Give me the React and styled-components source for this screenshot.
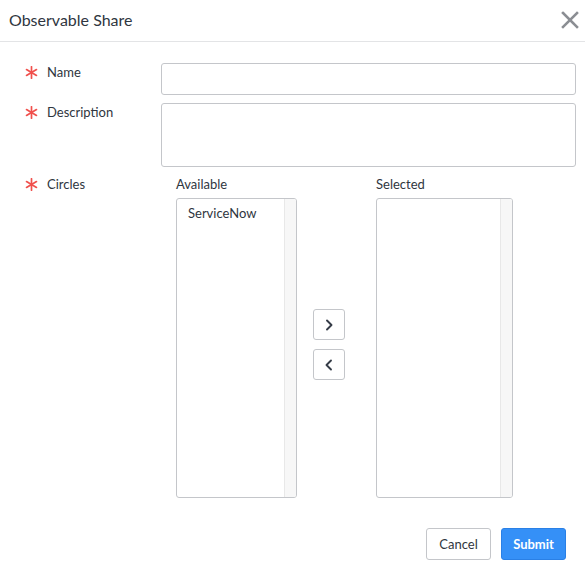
import React, { useState } from 'react';
import styled, { createGlobalStyle } from 'styled-components';

const GlobalStyle = createGlobalStyle`
  body {
    margin: 0;
    background: #fff;
    font-family: Lato, "Liberation Sans", sans-serif;
    color: #2f3640;
  }
`;

const Modal = styled.div`
  width: 585px;
  height: 567px;
  display: flex;
  flex-direction: column;
  background: #fff;
`;

const Header = styled.div`
  height: 42px;
  display: flex;
  align-items: center;
  justify-content: space-between;
  padding: 0 5px 2px 9px;
  border-bottom: 1px solid #e3e4e6;
  box-sizing: border-box;
`;

const Title = styled.h1`
  margin: 0;
  font-size: 16px;
  font-weight: 400;
  color: #2f3640;
`;

const CloseButton = styled.button`
  border: none;
  background: none;
  padding: 0;
  width: 20px;
  height: 20px;
  display: flex;
  align-items: center;
  justify-content: center;
  cursor: pointer;
`;

const Body = styled.div`
  flex: 1;
  padding: 21px 9px 0 25px;
  display: flex;
  flex-direction: column;
  gap: 8px;
`;

const Row = styled.div`
  display: grid;
  grid-template-columns: 136px 1fr;
`;

const Label = styled.label`
  display: flex;
  align-items: flex-start;
  gap: 8px;
  font-size: 13px;
  line-height: 18px;
  color: #2f3640;
`;

const Star = styled.span`
  display: flex;
  width: 14px;
  height: 18px;
  align-items: center;
`;

const TextInput = styled.input`
  height: 32px;
  box-sizing: border-box;
  border: 1px solid #c4c6ca;
  border-radius: 3px;
  padding: 0 8px;
  font: inherit;
  font-size: 13px;
  outline: none;
`;

const TextArea = styled.textarea`
  height: 64px;
  box-sizing: border-box;
  border: 1px solid #c4c6ca;
  border-radius: 3px;
  padding: 6px 8px;
  font: inherit;
  font-size: 13px;
  resize: none;
  outline: none;
`;

const Picker = styled.div`
  display: flex;
  padding-left: 15px;
`;

const Column = styled.div`
  display: flex;
  flex-direction: column;
  width: ${p => p.width}px;
`;

const ColumnTitle = styled.div`
  font-size: 13px;
  line-height: 18px;
  margin-bottom: 5px;
  color: #2f3640;
`;

const ListBox = styled.div`
  height: 300px;
  box-sizing: border-box;
  border: 1px solid #c4c6ca;
  border-radius: 3px;
  display: flex;
  overflow: hidden;
`;

const Items = styled.div`
  flex: 1;
  padding: 6px 11px;
`;

const Item = styled.div`
  font-size: 13px;
  line-height: 17px;
  color: #2f3640;
`;

const Track = styled.div`
  width: 11px;
  background: #f7f7f7;
  border-left: 1px solid #e8e8e8;
`;

const Arrows = styled.div`
  width: 79px;
  display: flex;
  flex-direction: column;
  justify-content: center;
  gap: 9px;
  padding: 16px 0 0 16px;
  box-sizing: border-box;
`;

const ArrowButton = styled.button`
  width: 32px;
  height: 31px;
  border: 1px solid #c4c6ca;
  border-radius: 3px;
  background: #fff;
  padding: 0;
  display: flex;
  align-items: center;
  justify-content: center;
  cursor: pointer;
`;

const Footer = styled.div`
  display: flex;
  justify-content: flex-end;
  gap: 10px;
  padding: 0 19px 7px 0;
`;

const Button = styled.button`
  width: 65px;
  height: 32px;
  box-sizing: border-box;
  border-radius: 3px;
  font-family: inherit;
  font-size: 13px;
  font-weight: ${p => (p.primary ? 700 : 400)};
  color: ${p => (p.primary ? '#fff' : '#2f3640')};
  background: ${p => (p.primary ? '#3590f7' : '#fff')};
  border: 1px solid ${p => (p.primary ? '#2a80e6' : '#c4c6ca')};
  cursor: pointer;
`;

const Asterisk = () => (
  <Star>
    <svg width="13" height="13" viewBox="0 0 13 13">
      <g stroke="#f0504c" strokeWidth="1.7" strokeLinecap="round">
        <line x1="6.5" y1="0.8" x2="6.5" y2="12.2" />
        <line x1="1.5" y1="3.6" x2="11.5" y2="9.4" />
        <line x1="1.5" y1="9.4" x2="11.5" y2="3.6" />
      </g>
    </svg>
  </Star>
);

const Chevron = ({ dir }) => (
  <svg width="10" height="12" viewBox="0 0 10 12">
    <polyline
      points={dir === 'right' ? '3,1.5 7.5,6 3,10.5' : '7,1.5 2.5,6 7,10.5'}
      fill="none"
      stroke="#353c47"
      strokeWidth="1.9"
      strokeLinecap="round"
      strokeLinejoin="round"
    />
  </svg>
);

const App = () => {
  const [available, setAvailable] = useState(['ServiceNow']);
  const [selected, setSelected] = useState([]);

  const moveRight = () => {
    setSelected([...selected, ...available]);
    setAvailable([]);
  };

  const moveLeft = () => {
    setAvailable([...available, ...selected]);
    setSelected([]);
  };

  return (
    <>
      <GlobalStyle />
      <Modal>
        <Header>
          <Title>Observable Share</Title>
          <CloseButton aria-label="Close">
            <svg width="18" height="18" viewBox="0 0 18 18">
              <g stroke="#8b8e93" strokeWidth="2.6" strokeLinecap="square">
                <line x1="2" y1="2" x2="16" y2="16" />
                <line x1="16" y1="2" x2="2" y2="16" />
              </g>
            </svg>
          </CloseButton>
        </Header>
        <Body>
          <Row>
            <Label><Asterisk />Name</Label>
            <TextInput name="name" />
          </Row>
          <Row>
            <Label><Asterisk />Description</Label>
            <TextArea name="description" />
          </Row>
          <Row>
            <Label><Asterisk />Circles</Label>
            <Picker>
              <Column width={121}>
                <ColumnTitle>Available</ColumnTitle>
                <ListBox>
                  <Items>
                    {available.map(c => <Item key={c}>{c}</Item>)}
                  </Items>
                  <Track />
                </ListBox>
              </Column>
              <Arrows>
                <ArrowButton onClick={moveRight}><Chevron dir="right" /></ArrowButton>
                <ArrowButton onClick={moveLeft}><Chevron dir="left" /></ArrowButton>
              </Arrows>
              <Column width={137}>
                <ColumnTitle>Selected</ColumnTitle>
                <ListBox>
                  <Items>
                    {selected.map(c => <Item key={c}>{c}</Item>)}
                  </Items>
                  <Track />
                </ListBox>
              </Column>
            </Picker>
          </Row>
        </Body>
        <Footer>
          <Button>Cancel</Button>
          <Button primary>Submit</Button>
        </Footer>
      </Modal>
    </>
  );
};

export default App;
